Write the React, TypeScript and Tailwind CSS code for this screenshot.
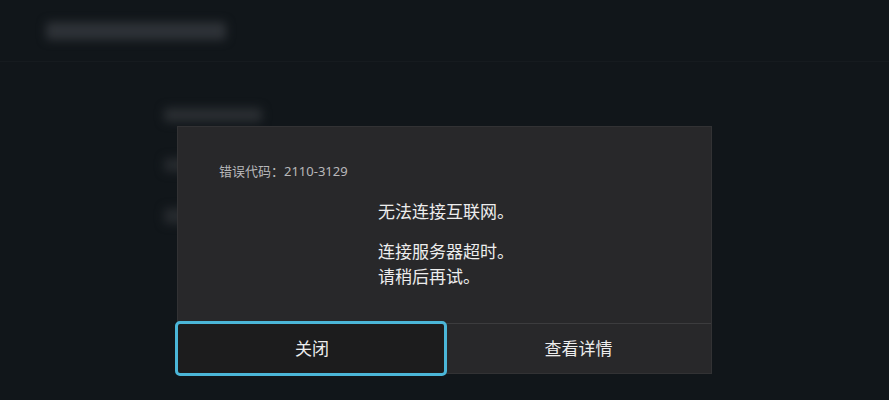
import React from "react";

export default function App() {
  return (
    <div
      className="relative w-[889px] h-[400px] overflow-hidden bg-[#11161a]"
      style={{ fontFamily: '"Noto Sans", "Noto Sans CJK SC", sans-serif' }}
    >
      {/* blurred background page */}
      <div className="flex flex-col">
        <div className="h-[62px] flex items-center pl-[46px] border-b border-[#161b1f]">
          <div className="w-[180px] h-[18px] rounded bg-[#2e3237] blur-[5px]" />
        </div>
        <div className="flex flex-col pl-[164px] pt-[46px] gap-[36px]">
          <div className="w-[98px] h-[14px] rounded bg-[#2a2e32] blur-[5px]" />
          <div className="w-[60px] h-[14px] rounded bg-[#262a2e] blur-[5px]" />
          <div className="w-[60px] h-[16px] rounded bg-[#262a2e] blur-[5px]" />
        </div>
      </div>

      {/* dialog */}
      <div className="absolute left-[177px] top-[126px] w-[535px] h-[248px] bg-[#28282a] border border-[#323234] flex flex-col">
        <div className="flex-1 flex flex-col pt-[34px]">
          <div className="pl-[41px] text-[13px] leading-[20px] text-[#b8b8ba]">
            错误代码：2110-3129
          </div>
          <div className="pl-[200px] pt-[18px] text-[17px] leading-[25px] text-[#ededed]">
            <div>无法连接互联网。</div>
            <div className="mt-[15px]">连接服务器超时。</div>
            <div>请稍后再试。</div>
          </div>
        </div>
        <div className="h-[50px] grid grid-cols-[268px_1fr] border-t border-[#3c3c3e]">
          <div className="relative flex items-center justify-center text-[17px] text-[#ededed]">
            <div className="absolute -left-[3px] -top-[3px] -right-[1px] -bottom-[3px] rounded-[5px] border-[3px] border-[#4bb6d8] bg-[#1c1c1d]" />
            <span className="relative">关闭</span>
          </div>
          <div className="flex items-center justify-center text-[17px] text-[#ededed]">
            查看详情
          </div>
        </div>
      </div>
    </div>
  );
}
